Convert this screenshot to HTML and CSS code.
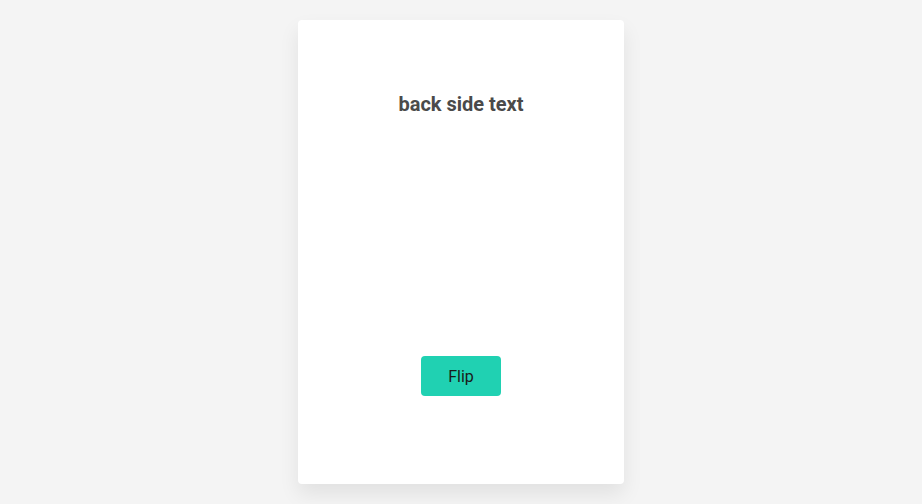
FILE: index.html
```html
<!DOCTYPE html>
<html>
<head>
<meta charset="utf-8">
<link rel="stylesheet" href="styles.css">
</head>
<body>
<div class="page">
  <div class="card">
    <h2 class="title">back side text</h2>
    <button class="flip">Flip</button>
  </div>
</div>
</body>
</html>
```
FILE: styles.css
```css
html, body {
  margin: 0;
  padding: 0;
  background: #f4f4f4;
  font-family: Roboto, "Liberation Sans", sans-serif;
}
.page {
  display: flex;
  justify-content: center;
  padding-top: 20px;
  height: 504px;
  box-sizing: border-box;
}
.card {
  width: 326px;
  height: 464px;
  box-sizing: border-box;
  background: #fff;
  border-radius: 4px;
  box-shadow: 0 10px 20px rgba(0,0,0,0.08);
  display: flex;
  flex-direction: column;
  align-items: center;
  padding: 72px 0 88px;
}
.title {
  margin: 0;
  font-size: 20px;
  line-height: 24px;
  font-weight: 700;
  color: #4a4a4a;
}
.flip {
  margin-top: auto;
  width: 80px;
  height: 40px;
  border: none;
  border-radius: 4px;
  background: #20d1b2;
  color: #1a1a1a;
  font-family: Roboto, "Liberation Sans", sans-serif;
  font-size: 16px;
  padding: 0;
}
```
